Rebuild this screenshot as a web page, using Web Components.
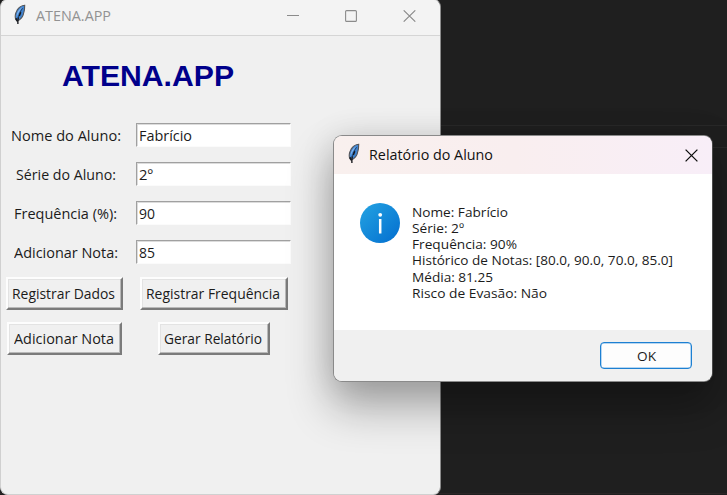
<!DOCTYPE html>
<html lang="pt-BR">
<head>
<meta charset="utf-8">
<title>ATENA.APP</title>
<style>
html,body{margin:0;height:100%;overflow:hidden;background:#1f1f1f}
body{font-family:"Open Sans","Noto Sans",sans-serif;color:#1b1b1b}
</style>
</head>
<body>
<desk-top>
  <main-window></main-window>
  <message-box></message-box>
</desk-top>
<script>
const make = (name, html, after) => customElements.define(name, class extends HTMLElement {
  connectedCallback() {
    if (this.shadowRoot) return;
    const t = document.createElement('template');
    t.innerHTML = html;
    this.attachShadow({mode: 'open'}).append(t.content.cloneNode(true));
    if (after) after(this, this.shadowRoot);
  }
});

/* One line of text condensed or widened to the width given by "w". */
make('fit-text', `<style>
:host{display:inline-block;white-space:nowrap;text-align:left;flex:none}
span{display:inline-block;transform-origin:0 50%}
</style><span><slot></slot></span>`, (el, root) => {
  const s = root.querySelector('span'), w = +el.getAttribute('w');
  el.style.width = w + 'px';
  s.style.transform = 'scaleX(' + w / s.getBoundingClientRect().width + ')';
});

make('feather-icon', `<style>:host{display:block;width:14px;height:21px;flex:none}svg{display:block}</style>
<svg width="14" height="21" viewBox="0 0 14 21">
<path d="M12.7 1.3C9.6 1.4 7 3.2 5 6.4 3.5 9 2.7 12.300 3.600 15.400l1.700 1.700c2.600-1.300 4.900-3.300 5.900-6.200C12.200 7.800 12.900 4.500 12.700 1.300z" fill="#3f83d0" stroke="#55565a" stroke-width="1.100"/>
<path d="M10.800 3C7.900 4.200 5.700 7 4.900 9.900c-.3 1.200-.3 2.200-.2 3.100C6 9.300 8 5.900 10.800 3z" fill="#83b6ee"/>
<path d="M10.500 4.200C8.700 7 7 10.500 6.100 14.400" fill="none" stroke="#1c3557" stroke-width=".9"/>
<path d="M8.800 8.200L7.300 12M4 14.200l1.300 3.100" fill="none" stroke="#15181f" stroke-width="1.500"/>
<path d="M6.300 13.500C5.800 16 5.700 18 5.900 20" fill="none" stroke="#1b1c20" stroke-width="1.400"/>
</svg>`);

make('text-field', `<style>
:host{display:flex;align-items:center;box-sizing:border-box;width:155px;height:24px;background:#fff;border:1px solid;border-color:#a0a0a0 #fbfbfb #fbfbfb #a0a0a0;box-shadow:inset 1px 1px #dcdcdc;padding:0 0 0 2px;font-size:15px;line-height:20px}
</style><slot></slot>`);

make('push-button', `<style>
:host{display:flex;align-items:center;justify-content:center;box-sizing:border-box;height:33px;background:#f0f0f0;border:2px solid;border-color:#fdfdfd #7b7b7b #7b7b7b #fdfdfd;box-shadow:inset -1px -1px #b9b9b9,inset 1px 1px #e3e3e3;font-size:15px;line-height:20px;padding:0 2px 1px 0}
</style><slot></slot>`);

make('field-row', `<style>
:host{display:grid;grid-template-columns:129px 155px;column-gap:6px;height:39px;align-items:center}
.l{text-align:center;font-size:15px;line-height:20px;height:21px}
</style><div class="l"><slot name="label"></slot></div><text-field><slot></slot></text-field>`);

make('main-window', `<style>
:host{display:flex;flex-direction:column;position:absolute;left:0;top:-1px;width:441px;height:496px;box-sizing:border-box;background:#f0f0f0;border:1px solid #d0d0d0;border-right-color:#8b8b8b;border-radius:8px;overflow:hidden}
header{display:flex;align-items:flex-start;height:36px;box-sizing:border-box;background:#f3f3f3;border-bottom:1px solid #d5d5d5;color:#929292;font-size:14.4px;line-height:20px;padding:4px 24px 0 11px}
header fit-text{margin:2px 0 0 10px}
.c{display:flex;gap:46px;margin:6px 0 0 auto}
svg{display:block;fill:none;stroke:#8b8b8b;stroke-width:1.1}
h1{margin:23px 0 0 61px;height:35px;font:bold 29.5px/34px "Liberation Sans",Arial,sans-serif;color:#00008b}
form{display:block;margin-top:21.500px}
.b{display:grid;grid-template-columns:127px 171px;justify-items:center;row-gap:12px;margin-top:5.500px}
</style>
<header><feather-icon></feather-icon><fit-text w="75">ATENA.APP</fit-text>
<div class="c">
<svg width="12" height="12"><path d="M0 5.5h12"/></svg>
<svg width="12" height="12"><rect x=".6" y=".6" width="10.8" height="10.8" rx="1"/></svg>
<svg width="13" height="12"><path d="M.7.3l11.6 11.4M12.3.3L.7 11.7"/></svg>
</div></header>
<h1><fit-text w="172">ATENA.APP</fit-text></h1>
<form>
<field-row><fit-text slot="label" w="110">Nome do Aluno:</fit-text><fit-text w="53">Fabrício</fit-text></field-row>
<field-row><fit-text slot="label" w="100">Série do Aluno:</fit-text><fit-text w="14">2º</fit-text></field-row>
<field-row><fit-text slot="label" w="103">Frequência (%):</fit-text><fit-text w="16">90</fit-text></field-row>
<field-row><fit-text slot="label" w="104">Adicionar Nota:</fit-text><fit-text w="16">85</fit-text></field-row>
</form>
<div class="b">
<push-button style="width:117px"><fit-text w="103">Registrar Dados</fit-text></push-button>
<push-button style="width:148px"><fit-text w="134">Registrar Frequência</fit-text></push-button>
<push-button style="width:115px"><fit-text w="100">Adicionar Nota</fit-text></push-button>
<push-button style="width:112px"><fit-text w="98">Gerar Relatório</fit-text></push-button>
</div>`);

make('message-box', `<style>
:host{display:flex;flex-direction:column;position:absolute;left:333px;top:135px;width:380px;height:247px;box-sizing:border-box;border:1px solid #8a8a8a;border-right-color:#4a4a4a;border-radius:9px;background:#fff;background-clip:padding-box;box-shadow:0 24px 44px 2px rgba(0,0,0,.3),0 3px 34px rgba(0,0,0,.12);overflow:hidden}
header{display:flex;height:38px;box-sizing:border-box;background:linear-gradient(90deg,#f9f0ee,#f9eeef 48%,#f8eef8);color:#111;font-size:15px;line-height:20px;padding:7px 14px 0 12px}
header fit-text{margin:1px 0 0 9px}
header svg{display:block;margin:6px 0 0 auto;fill:none;stroke:#111;stroke-width:1.3}
main{display:flex;height:156px;box-sizing:border-box;padding:29px 0 0 26px;gap:12px}
main svg{flex:none;display:block}
.t{display:flex;flex-direction:column;font-size:13px;line-height:16.25px;padding-top:.5px}
footer{display:flex;flex:1;justify-content:flex-end;background:#f0f0f0;padding:12px 20px 0 0}
.ok{display:flex;align-items:center;justify-content:center;box-sizing:border-box;width:92px;height:27px;border:1.5px solid #1d80d2;box-shadow:inset 0 0 0 .5px #70b0e6;border-radius:4px;background:#fdfdfd;font-size:13px;line-height:18px;color:#1b1b1b}
</style>
<header><feather-icon></feather-icon><fit-text w="124">Relatório do Aluno</fit-text>
<svg width="13" height="13"><path d="M.6.6l11.8 11.8M12.4.6L.6 12.4"/></svg></header>
<main>
<svg width="40" height="40" viewBox="0 0 40 40"><defs><linearGradient id="g" x1="0" y1="0" x2="1" y2="1"><stop offset=".1" stop-color="#219ee0"/><stop offset=".9" stop-color="#0673d1"/></linearGradient></defs><circle cx="20" cy="20" r="20" fill="url(#g)"/><circle cx="20.2" cy="11.8" r="1.9" fill="#fff"/><path d="M20.2 16v14.5" stroke="#fff" stroke-width="2.5"/></svg>
<div class="t">
<fit-text w="96">Nome: Fabrício</fit-text>
<fit-text w="52">Série: 2º</fit-text>
<fit-text w="105">Frequência: 90%</fit-text>
<fit-text w="261">Histórico de Notas: [80.0, 90.0, 70.0, 85.0]</fit-text>
<fit-text w="81">Média: 81.25</fit-text>
<fit-text w="135">Risco de Evasão: Não</fit-text>
</div></main>
<footer><div class="ok"><fit-text w="19">OK</fit-text></div></footer>`);

make('desk-top', `<style>
:host{display:block;position:relative;width:727px;height:495px;overflow:hidden;
background:linear-gradient(#292929,#292929) 0 125px/100% 1px no-repeat,linear-gradient(#292929,#292929) 0 147px/100% 1px no-repeat,linear-gradient(#2b2526,#2b2526) 0 493px/100% 1px no-repeat,#1f1f1f}
</style><slot></slot>`);
</script>
</body>
</html>
